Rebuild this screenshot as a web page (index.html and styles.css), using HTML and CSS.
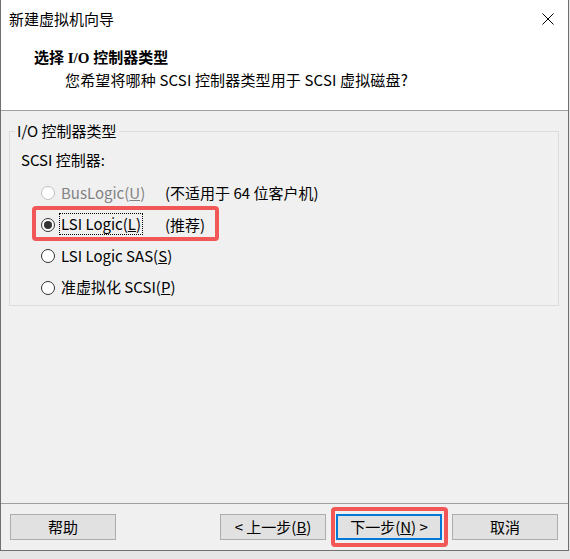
FILE: index.html
```html
<!DOCTYPE html>
<html lang="zh-CN">

<head>
    <meta charset="UTF-8">
    <meta name="viewport" content="width=device-width, initial-scale=1.0">
    <title>新建虚拟机向导</title>
    <link rel="stylesheet" href="styles.css">
</head>

<body>
    <div class="window">
        <div class="titlebar">
            <span class="title">新建虚拟机向导</span>
            <svg class="close" width="12" height="12" viewBox="0 0 12 12">
                <path d="M0.5 0.5 L11.5 11.5 M11.5 0.5 L0.5 11.5" stroke="#000" stroke-width="1" fill="none" />
            </svg>
        </div>

        <div class="header">
            <h1 class="heading">选择 I/O 控制器类型</h1>
            <p class="subheading">您希望将哪种 SCSI 控制器类型用于 SCSI 虚拟磁盘?</p>
        </div>

        <div class="content">
            <fieldset class="group">
                <legend>I/O 控制器类型</legend>
                <div class="group-label">SCSI 控制器:</div>
                <div class="options">
                    <div class="option disabled">
                        <span class="radio"></span>
                        <span class="opt-main"><span class="opt-text">BusLogic(<u>U</u>)</span></span>
                        <span class="opt-note">(不适用于 64 位客户机)</span>
                    </div>
                    <div class="option">
                        <span class="radio checked"></span>
                        <span class="opt-main"><span class="opt-text focus">LSI Logic(<u>L</u>)</span></span>
                        <span class="opt-note">(推荐)</span>
                        <span class="mark mark-option"></span>
                    </div>
                    <div class="option">
                        <span class="radio"></span>
                        <span class="opt-main"><span class="opt-text">LSI Logic SAS(<u>S</u>)</span></span>
                    </div>
                    <div class="option">
                        <span class="radio"></span>
                        <span class="opt-main"><span class="opt-text">准虚拟化 SCSI(<u>P</u>)</span></span>
                    </div>
                </div>
            </fieldset>
        </div>

        <div class="footer">
            <button class="btn">帮助</button>
            <div class="nav-buttons">
                <button class="btn">&lt; 上一步(<u>B</u>)</button>
                <button class="btn btn-default">下一步(<u>N</u>) &gt;<span class="mark mark-button"></span></button>
                <button class="btn">取消</button>
            </div>
        </div>
    </div>
</body>

</html>
```

FILE: styles.css
```css
html {
    background: #e6e6e6;
}

body {
    margin: 0;
    font-family: "Noto Sans CJK SC", "Noto Sans", sans-serif;
    font-size: 15px;
    color: #000;
}

.window {
    width: 567px;
    border: 1px solid #707070;
    border-top: none;
    background: #f0f0f0;
}

/* 타이틀바 + 헤더는 흰색 */
.titlebar {
    height: 38px;
    display: flex;
    align-items: center;
    justify-content: space-between;
    padding: 0 14px 0 8px;
    background: #fff;
}

.title {
    line-height: 38px;
}

.close {
    display: block;
}

.header {
    height: 72px;
    background: #fff;
    border-bottom: 1px solid #a0a0a0;
}

.heading {
    margin: 0;
    padding: 10px 0 0 33px;
    font-family: "Liberation Serif", "Noto Sans CJK SC", serif;
    font-size: 15px;
    font-weight: bold;
    line-height: 20px;
}

.subheading {
    margin: 2px 0 0 64px;
    line-height: 20px;
    letter-spacing: 0.15px;
}

.content {
    height: 392px;
    padding-top: 11px;
    box-sizing: border-box;
}

.group {
    margin: 0 9px 0 8px;
    padding: 0 0 2px 11px;
    border: 1px solid #dcdcdc;
    min-width: 0;
}

.group legend {
    margin-left: -6px;
    padding: 0 2px;
    line-height: 18px;
}

.group-label {
    margin-top: 10px;
    line-height: 20px;
}

.options {
    margin-top: 7px;
}

.option {
    position: relative;
    display: flex;
    align-items: center;
    height: 31.5px;
    white-space: nowrap;
}

.radio {
    position: relative;
    flex: 0 0 14px;
    width: 14px;
    height: 14px;
    margin: 1px 4px 0 20px;
    box-sizing: border-box;
    border: 1px solid #333;
    border-radius: 50%;
    background: #fff;
}

.radio.checked::after {
    content: '';
    position: absolute;
    left: 2px;
    top: 2px;
    width: 8px;
    height: 8px;
    border-radius: 50%;
    background: #333;
}

.opt-main {
    flex: 0 0 106px;
}

.opt-text {
    display: inline-block;
    padding: 0 1px;
    line-height: 20px;
    border: 1px dotted transparent;
}

.opt-text.focus {
    border-color: #000;
}

.disabled .radio {
    border-color: #bfbfbf;
}

.disabled .opt-text {
    color: #838383;
}

/* 빨간 강조 박스 */
.mark {
    position: absolute;
    border: 4px solid #f25757;
    border-radius: 4px;
    pointer-events: none;
}

.mark-option {
    left: 11px;
    top: -3px;
    width: 187px;
    height: 35px;
    box-sizing: border-box;
}

.footer {
    height: 36px;
    border-top: 1px solid #a0a0a0;
    display: flex;
    align-items: flex-start;
    justify-content: space-between;
    padding: 10px 10px 0 9px;
}

.nav-buttons {
    display: flex;
    gap: 10px;
}

.btn {
    position: relative;
    width: 106px;
    height: 26px;
    padding: 0;
    font-family: inherit;
    font-size: 15px;
    line-height: 22px;
    color: #000;
    background: #e1e1e1;
    border: 1px solid #adadad;
}

.btn-default {
    border: 2px solid #0078d7;
}

.mark-button {
    top: -9px;
    right: -8px;
    bottom: -9px;
    left: -7px;
}
```
